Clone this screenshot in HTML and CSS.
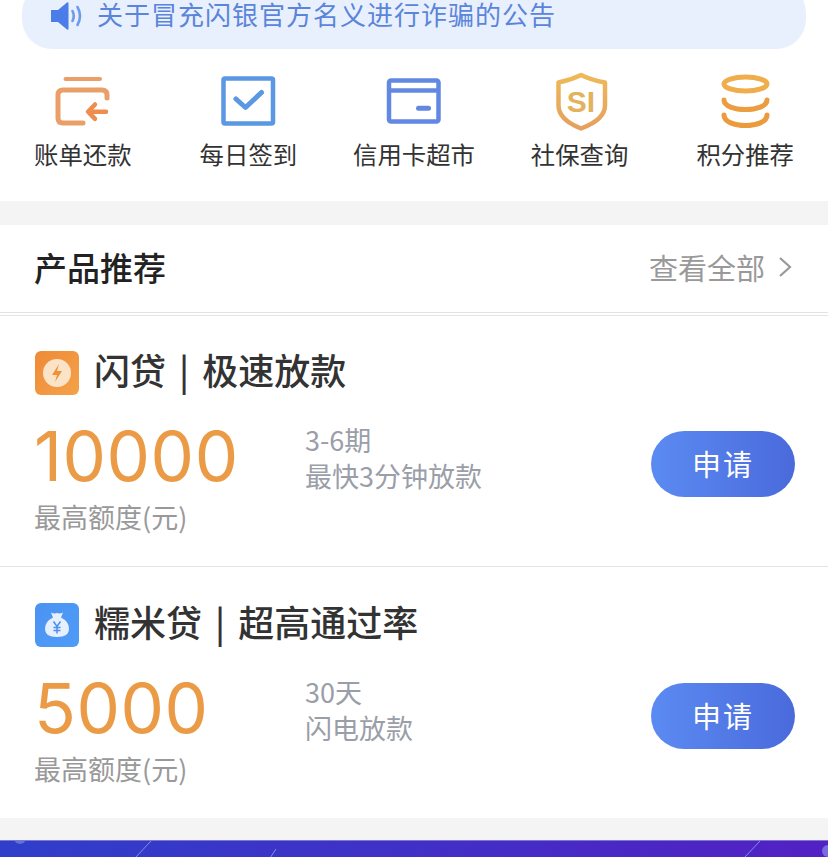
FILE: index.html
```html
<!DOCTYPE html>
<html lang="zh-CN">
<head>
    <meta charset="UTF-8">
    <meta name="viewport" content="width=device-width, initial-scale=1.0">
    <title>产品推荐</title>
    <link rel="stylesheet" href="styles.css">
</head>
<body>

<div class="page">
    <div class="top-block">
        <div class="notice">
            <svg class="notice-icon" viewBox="0 0 34 30" width="34" height="30">
                <path d="M1 9h7L17 1.500q1.500-1 1.500 1v25q0 2-1.500 1L8 21H1z" fill="#4a7de8"/>
                <path d="M22.500 10q2.500 5 0 10" fill="none" stroke="#6f9aec" stroke-width="2.600" stroke-linecap="round"/>
                <path d="M27.500 6q5 9 0 18" fill="none" stroke="#6f9aec" stroke-width="2.600" stroke-linecap="round"/>
            </svg>
            <span class="notice-text">关于冒充闪银官方名义进行诈骗的公告</span>
        </div>

        <div class="menu">
            <div class="menu-item">
                <svg viewBox="0 0 56 54" width="56" height="54">
                    <path d="M10.500 4H45" fill="none" stroke="#eb9f68" stroke-width="4" stroke-linecap="round"/>
                    <path d="M52 23v-3q0-5-5-5H8q-5 0-5 5v23q0 5 5 5h20" fill="none" stroke="#eb9f68" stroke-width="5" stroke-linecap="round"/>
                    <path d="M51 36.700H35" fill="none" stroke="#ee8d4e" stroke-width="4.500" stroke-linecap="round"/>
                    <path d="M40 29.500l-7 7.200 7 7.200" fill="none" stroke="#ee8d4e" stroke-width="4.500" stroke-linecap="round" stroke-linejoin="round"/>
                </svg>
                <span>账单还款</span>
            </div>
            <div class="menu-item">
                <svg viewBox="0 0 56 54" width="56" height="54">
                    <rect x="3.500" y="3.500" width="49.500" height="45" rx="1.500" fill="none" stroke="#5a98e3" stroke-width="4.500"/>
                    <path d="M16 24l9.500 8.500 16-15" fill="none" stroke="#5a98e3" stroke-width="5" stroke-linecap="round" stroke-linejoin="round"/>
                </svg>
                <span>每日签到</span>
            </div>
            <div class="menu-item">
                <svg viewBox="0 0 56 54" width="56" height="54">
                    <rect x="3" y="5.500" width="49.500" height="41" rx="2" fill="none" stroke="#6388e2" stroke-width="4.500"/>
                    <path d="M3 15.500h49.500" stroke="#6388e2" stroke-width="4.500"/>
                    <path d="M32.500 33.300h10" stroke="#6388e2" stroke-width="5" stroke-linecap="round"/>
                </svg>
                <span>信用卡超市</span>
            </div>
            <div class="menu-item">
                <svg viewBox="0 0 56 54" width="56" height="54">
                    <defs>
                        <linearGradient id="shieldStroke" x1="0" y1="0" x2="0" y2="1">
                            <stop offset="0" stop-color="#eeb958"/>
                            <stop offset="1" stop-color="#e5a05f"/>
                        </linearGradient>
                    </defs>
                    <path d="M29 0q10 5 24 7.500v23q0 14-24 23Q6.500 44.500 6.500 30.500v-23Q19 5 29 0z" fill="none" stroke="url(#shieldStroke)" stroke-width="4.500" stroke-linejoin="round"/>
                    <text x="29" y="37" text-anchor="middle" class="shield-text">SI</text>
                </svg>
                <span>社保查询</span>
            </div>
            <div class="menu-item">
                <svg viewBox="0 0 56 54" width="56" height="54">
                    <ellipse cx="28.500" cy="9" rx="21.500" ry="7" fill="none" stroke="#efad4b" stroke-width="5"/>
                    <path d="M7 25c0 12.700 43 12.700 43 0" fill="none" stroke="#ec9d40" stroke-width="5" stroke-linecap="round"/>
                    <path d="M7 40c0 14 43 14 43 0" fill="none" stroke="#ec9a3c" stroke-width="5" stroke-linecap="round"/>
                </svg>
                <span>积分推荐</span>
            </div>
        </div>
    </div>

    <div class="products">
        <div class="products-head">
            <h2>产品推荐</h2>
            <div class="view-all">
                <span>查看全部</span>
                <svg viewBox="0 0 14 22" width="14" height="22">
                    <path d="M2 2l10 9-10 9" fill="none" stroke="#999" stroke-width="2.200"/>
                </svg>
            </div>
        </div>

        <div class="product">
            <div class="product-title">
                <div class="logo logo-orange">
                    <svg viewBox="0 0 44 44" width="44" height="44">
                        <circle cx="22" cy="22" r="14" fill="#fbe3c8"/>
                        <path d="M24 13l-7 11h5l-2 7 7-11h-5z" fill="#ee9235"/>
                    </svg>
                </div>
                <span>闪贷 | 极速放款</span>
            </div>
            <div class="product-body">
                <div class="amount-col">
                    <div class="amount">10000</div>
                    <div class="amount-label">最高额度(元)</div>
                </div>
                <div class="info">
                    <div>3-6期</div>
                    <div>最快3分钟放款</div>
                </div>
                <button class="apply">申请</button>
            </div>
        </div>

        <div class="product">
            <div class="product-title">
                <div class="logo logo-blue">
                    <svg viewBox="0 0 44 44" width="44" height="44">
                        <path d="M16 9.500q3 1.500 6 .5 3 1 6-.5l-2 5q8 4 8 11 0 8.500-12 8.500t-12-8.500q0-7 8-11z" fill="#e6effd"/>
                        <path d="M18.500 18.500l3.500 5 3.500-5M22 23.500v7M18.500 24.500h7M18.500 27.500h7" fill="none" stroke="#4b8ff0" stroke-width="1.500"/>
                    </svg>
                </div>
                <span>糯米贷 | 超高通过率</span>
            </div>
            <div class="product-body">
                <div class="amount-col">
                    <div class="amount">5000</div>
                    <div class="amount-label">最高额度(元)</div>
                </div>
                <div class="info">
                    <div>30天</div>
                    <div>闪电放款</div>
                </div>
                <button class="apply">申请</button>
            </div>
        </div>
    </div>

    <div class="banner">
        <svg viewBox="0 0 828 17" width="828" height="17">
            <path d="M151 0l-16 17M760 0l-16 17M276 8l-6 9" stroke="#7f8ff0" stroke-width="1" fill="none"/>
            <circle cx="20" cy="-3" r="6" fill="#5f72da"/>
            <circle cx="828" cy="10" r="6" fill="#7a6ce0"/>
        </svg>
    </div>
</div>

</body>
</html>
```

FILE: styles.css
```css
* {
    box-sizing: border-box;
}

html, body {
    margin: 0;
    padding: 0;
    background-color: #f4f4f5;
}

body {
    font-family: "Noto Sans CJK SC", "Noto Sans", sans-serif;
    color: #333333;
}

.page {
    width: 828px;
    height: 857px;
    overflow: hidden;
    display: flex;
    flex-direction: column;
}

/* notice + menu */
.top-block {
    height: 201px;
    background-color: #ffffff;
    flex-shrink: 0;
}

.notice {
    height: 66px;
    margin: -17px 22px 0;
    padding-left: 28px;
    display: flex;
    align-items: center;
    gap: 13px;
    background-color: #e9f0fd;
    border-radius: 30px;
}

.notice-icon {
    flex-shrink: 0;
}

.notice-text {
    padding-bottom: 4px;
    font-size: 26px;
    line-height: 26px;
    letter-spacing: 1px;
    color: #5b85da;
    white-space: nowrap;
}

.menu {
    display: grid;
    grid-template-columns: repeat(5, 1fr);
    padding-top: 26px;
}

.menu-item {
    display: flex;
    flex-direction: column;
    align-items: center;
    font-size: 24.4px;
    line-height: 34px;
    color: #333333;
}

.menu-item svg {
    margin-bottom: 8px;
    overflow: visible;
}

.shield-text {
    font-family: "Liberation Sans", sans-serif;
    font-size: 30px;
    font-weight: 700;
    fill: #e3b25c;
}

/* product list */
.products {
    margin-top: 24px;
    height: 593px;
    background-color: #ffffff;
    flex-shrink: 0;
}

.products-head {
    height: 88px;
    margin-bottom: 2px;
    padding: 0 36px 3px 34px;
    display: flex;
    align-items: center;
    justify-content: space-between;
    border-bottom: 1px solid #e2e2e2;
}

.products-head h2 {
    margin: 0;
    font-size: 33px;
    font-weight: 500;
    color: #222222;
}

.view-all {
    display: flex;
    align-items: center;
    gap: 13px;
    font-size: 29px;
    color: #999999;
}

.product {
    height: 251px;
    padding: 35px 33px 0 34px;
    border-top: 1px solid #e4e4e4;
}

.product + .product {
    height: 252px;
    padding-top: 36px;
}

.product-title {
    display: flex;
    align-items: center;
    gap: 15px;
    font-size: 36px;
    line-height: 36px;
    font-weight: 500;
    word-spacing: 5px;
    color: #333333;
    white-space: nowrap;
}

.product-title span {
    padding-bottom: 8px;
}

.logo {
    width: 44px;
    height: 44px;
    margin-left: 1px;
    border-radius: 6px;
    flex-shrink: 0;
}

.logo svg {
    display: block;
}

.logo-orange {
    background: linear-gradient(135deg, #ef8a37, #f4a24a);
}

.logo-blue {
    background: linear-gradient(135deg, #4b93f2, #4f9bf8);
}

.product-body {
    display: flex;
    align-items: flex-start;
    margin-top: 23px;
}

.amount-col {
    width: 271px;
    flex-shrink: 0;
}

.amount {
    font-family: Inter, sans-serif;
    font-size: 69px;
    line-height: 76px;
    letter-spacing: 0.5px;
    color: #eb9b45;
}

.amount-label {
    margin-top: 5px;
    font-size: 27px;
    line-height: 36px;
    color: #999999;
}

.info {
    flex: 1;
    padding-top: 4px;
    font-size: 27px;
    line-height: 36px;
    color: #9a9ea8;
}

.apply {
    width: 144px;
    height: 66px;
    margin-top: 13px;
    padding: 0 0 2px;
    border: none;
    border-radius: 33px;
    background: linear-gradient(90deg, #5b8bf2, #4a6adc);
    color: #ffffff;
    font-family: inherit;
    font-size: 29px;
    letter-spacing: 2px;
}

.banner {
    margin-top: 22px;
    height: 17px;
    background: linear-gradient(90deg, #2f3fc9, #5320c4);
    border-top: 1px solid #7d77d4;
    flex-shrink: 0;
}

.banner svg {
    display: block;
}
```
